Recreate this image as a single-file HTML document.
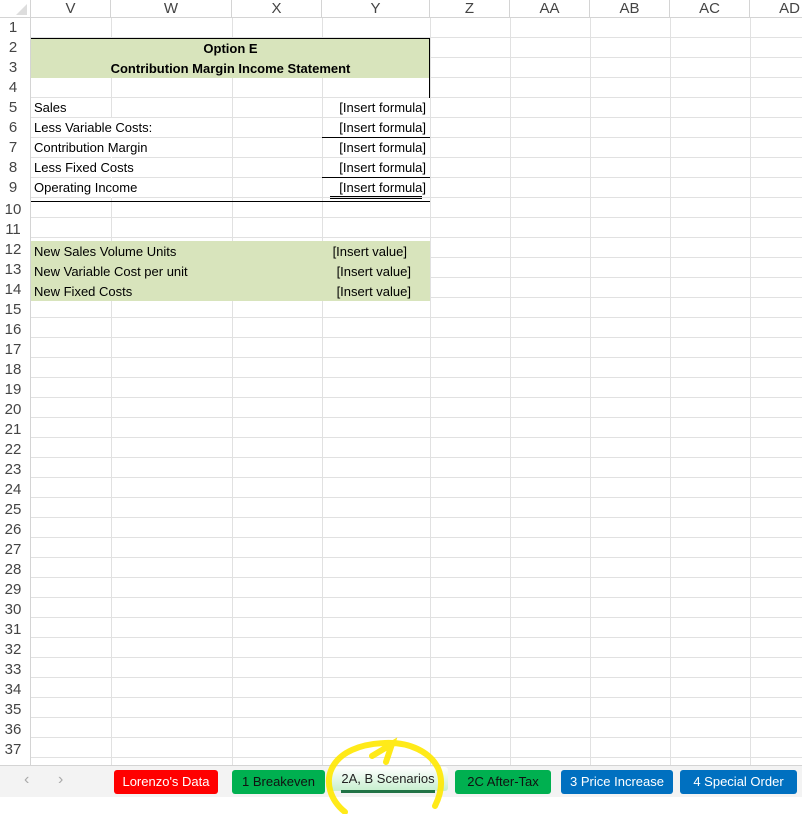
<!DOCTYPE html>
<html><head><meta charset="utf-8"><style>
*{margin:0;padding:0;box-sizing:border-box}
body{width:802px;height:814px;background:#fff;position:relative;overflow:hidden;font-family:"Liberation Sans",sans-serif}
.a{position:absolute}
#hdr{left:0;top:0;width:802px;height:18px;background:#fff;border-bottom:1px solid #d4d4d4}
.ch{position:absolute;top:0;height:18px;font-size:15px;color:#444;text-align:center;line-height:18px;border-right:1px solid #d4d4d4}
#grid{left:31px;top:18px;width:771px;height:747px;background:repeating-linear-gradient(to bottom,transparent 0,transparent 19px,#e1e1e1 19px,#e1e1e1 20px)}
.vl{position:absolute;top:18px;width:1px;height:747px;background:#e1e1e1}
#rh{left:0;top:18px;width:31px;height:747px;background:#fff;border-right:1px solid #d4d4d4}
.rn{position:absolute;left:0;width:26px;text-align:center;font-size:15px;color:#444;height:20px;line-height:20px}
.t{position:absolute;font-size:13px;color:#000;line-height:20px;white-space:nowrap}
.tab{position:absolute;top:770px;height:24px;border-radius:3px;font-size:13px;line-height:24px;text-align:center;color:#fff}
</style></head><body>
<div id="grid" class="a"></div>
<div class="vl" style="left:111px"></div><div class="vl" style="left:232px"></div><div class="vl" style="left:322px"></div><div class="vl" style="left:430px"></div><div class="vl" style="left:510px"></div><div class="vl" style="left:590px"></div><div class="vl" style="left:670px"></div><div class="vl" style="left:750px"></div>
<div id="hdr" class="a">
<div class="ch" style="left:0;width:31px"><svg width="31" height="18"><polygon points="27,4 27,15 16,15" fill="#ddd"/></svg></div>
<div class="ch" style="left:31px;width:80px">V</div><div class="ch" style="left:111px;width:121px">W</div><div class="ch" style="left:232px;width:90px">X</div><div class="ch" style="left:322px;width:108px">Y</div><div class="ch" style="left:430px;width:80px">Z</div><div class="ch" style="left:510px;width:80px">AA</div><div class="ch" style="left:590px;width:80px">AB</div><div class="ch" style="left:670px;width:80px">AC</div><div class="ch" style="left:750px;width:80px">AD</div>
</div>
<!-- hide W-line under overflowing text rows 6-9 -->
<div class="a" style="left:111px;top:118px;width:1px;height:80px;background:#fff"></div>
<div class="a" style="left:111px;top:137px;width:1px;height:1px;background:#e1e1e1"></div>
<!-- green blocks -->
<div class="a" style="left:31px;top:38px;width:399px;height:40px;background:#d8e4bc;border-top:1px solid #000"></div>
<div class="a" style="left:429px;top:38px;width:1px;height:60px;background:#000"></div>
<div class="a" style="left:31px;top:241px;width:399px;height:60px;background:#d8e4bc"></div>
<div class="t" style="left:31px;top:39px;width:399px;text-align:center;font-weight:bold">Option E</div>
<div class="t" style="left:31px;top:59px;width:399px;text-align:center;font-weight:bold">Contribution Margin Income Statement</div>
<div class="t" style="left:34px;top:98px">Sales</div>
<div class="t" style="left:34px;top:118px">Less Variable Costs:</div>
<div class="t" style="left:34px;top:138px">Contribution Margin</div>
<div class="t" style="left:34px;top:158px">Less Fixed Costs</div>
<div class="t" style="left:34px;top:178px">Operating Income</div>
<div class="t" style="left:322px;top:98px;width:104px;text-align:right">[Insert formula]</div>
<div class="t" style="left:322px;top:118px;width:104px;text-align:right">[Insert formula]</div>
<div class="t" style="left:322px;top:138px;width:104px;text-align:right">[Insert formula]</div>
<div class="t" style="left:322px;top:158px;width:104px;text-align:right">[Insert formula]</div>
<div class="t" style="left:322px;top:178px;width:104px;text-align:right">[Insert formula]</div>
<div class="a" style="left:322px;top:137px;width:108px;height:1px;background:#000"></div>
<div class="a" style="left:322px;top:177px;width:108px;height:1px;background:#000"></div>
<div class="a" style="left:330px;top:196px;width:92px;height:3px;border-top:1px solid #000;border-bottom:1px solid #000"></div>
<div class="a" style="left:31px;top:201px;width:399px;height:1px;background:#000"></div>
<div class="t" style="left:34px;top:242px">New Sales Volume Units</div>
<div class="t" style="left:34px;top:262px">New Variable Cost per unit</div>
<div class="t" style="left:34px;top:282px">New Fixed Costs</div>
<div class="t" style="left:322px;top:242px;width:85px;text-align:right">[Insert value]</div>
<div class="t" style="left:322px;top:262px;width:89px;text-align:right">[Insert value]</div>
<div class="t" style="left:322px;top:282px;width:89px;text-align:right">[Insert value]</div>
<div id="rh" class="a">
<div class="rn" style="top:0">1</div><div class="rn" style="top:20px">2</div><div class="rn" style="top:40px">3</div><div class="rn" style="top:60px">4</div><div class="rn" style="top:80px">5</div><div class="rn" style="top:100px">6</div><div class="rn" style="top:120px">7</div><div class="rn" style="top:140px">8</div><div class="rn" style="top:160px">9</div><div class="rn" style="top:182px">10</div><div class="rn" style="top:202px">11</div><div class="rn" style="top:222px">12</div><div class="rn" style="top:242px">13</div><div class="rn" style="top:262px">14</div><div class="rn" style="top:282px">15</div><div class="rn" style="top:302px">16</div><div class="rn" style="top:322px">17</div><div class="rn" style="top:342px">18</div><div class="rn" style="top:362px">19</div><div class="rn" style="top:382px">20</div><div class="rn" style="top:402px">21</div><div class="rn" style="top:422px">22</div><div class="rn" style="top:442px">23</div><div class="rn" style="top:462px">24</div><div class="rn" style="top:482px">25</div><div class="rn" style="top:502px">26</div><div class="rn" style="top:522px">27</div><div class="rn" style="top:542px">28</div><div class="rn" style="top:562px">29</div><div class="rn" style="top:582px">30</div><div class="rn" style="top:602px">31</div><div class="rn" style="top:622px">32</div><div class="rn" style="top:642px">33</div><div class="rn" style="top:662px">34</div><div class="rn" style="top:682px">35</div><div class="rn" style="top:702px">36</div><div class="rn" style="top:722px">37</div>
</div>
<!-- tab bar -->
<div class="a" style="left:0;top:765px;width:802px;height:32px;background:#f3f3f3;border-top:1px solid #d4d4d4"></div>
<div class="a" style="left:24px;top:771px;font-size:16px;color:#aaa">&#8249;</div>
<div class="a" style="left:58px;top:771px;font-size:16px;color:#aaa">&#8250;</div>
<div class="tab" style="left:114px;width:104px;background:#ff0000">Lorenzo's Data</div>
<div class="tab" style="left:232px;width:93px;background:#00b050;color:#111">1 Breakeven</div>
<div class="tab" style="left:328px;width:120px;background:linear-gradient(#fff,#c6efce);color:#222;top:767px">2A, B Scenarios</div>
<div class="a" style="left:341px;top:790px;width:94px;height:3px;background:#217346"></div>
<div class="tab" style="left:455px;width:96px;background:#00b050;color:#111">2C After-Tax</div>
<div class="tab" style="left:561px;width:112px;background:#0070c0">3 Price Increase</div>
<div class="tab" style="left:680px;width:117px;background:#0070c0">4 Special Order</div>
<svg class="a" style="left:0;top:0" width="802" height="814"><path d="M345 812 C330 800 325 782 332 768 C340 752 360 744 385 743 C410 742 430 752 438 768 C444 782 440 796 435 806 M372 756 L392 744 L386 762" fill="none" stroke="#ffe800" stroke-width="6" stroke-linecap="round" opacity="0.9"/></svg>
</body></html>
